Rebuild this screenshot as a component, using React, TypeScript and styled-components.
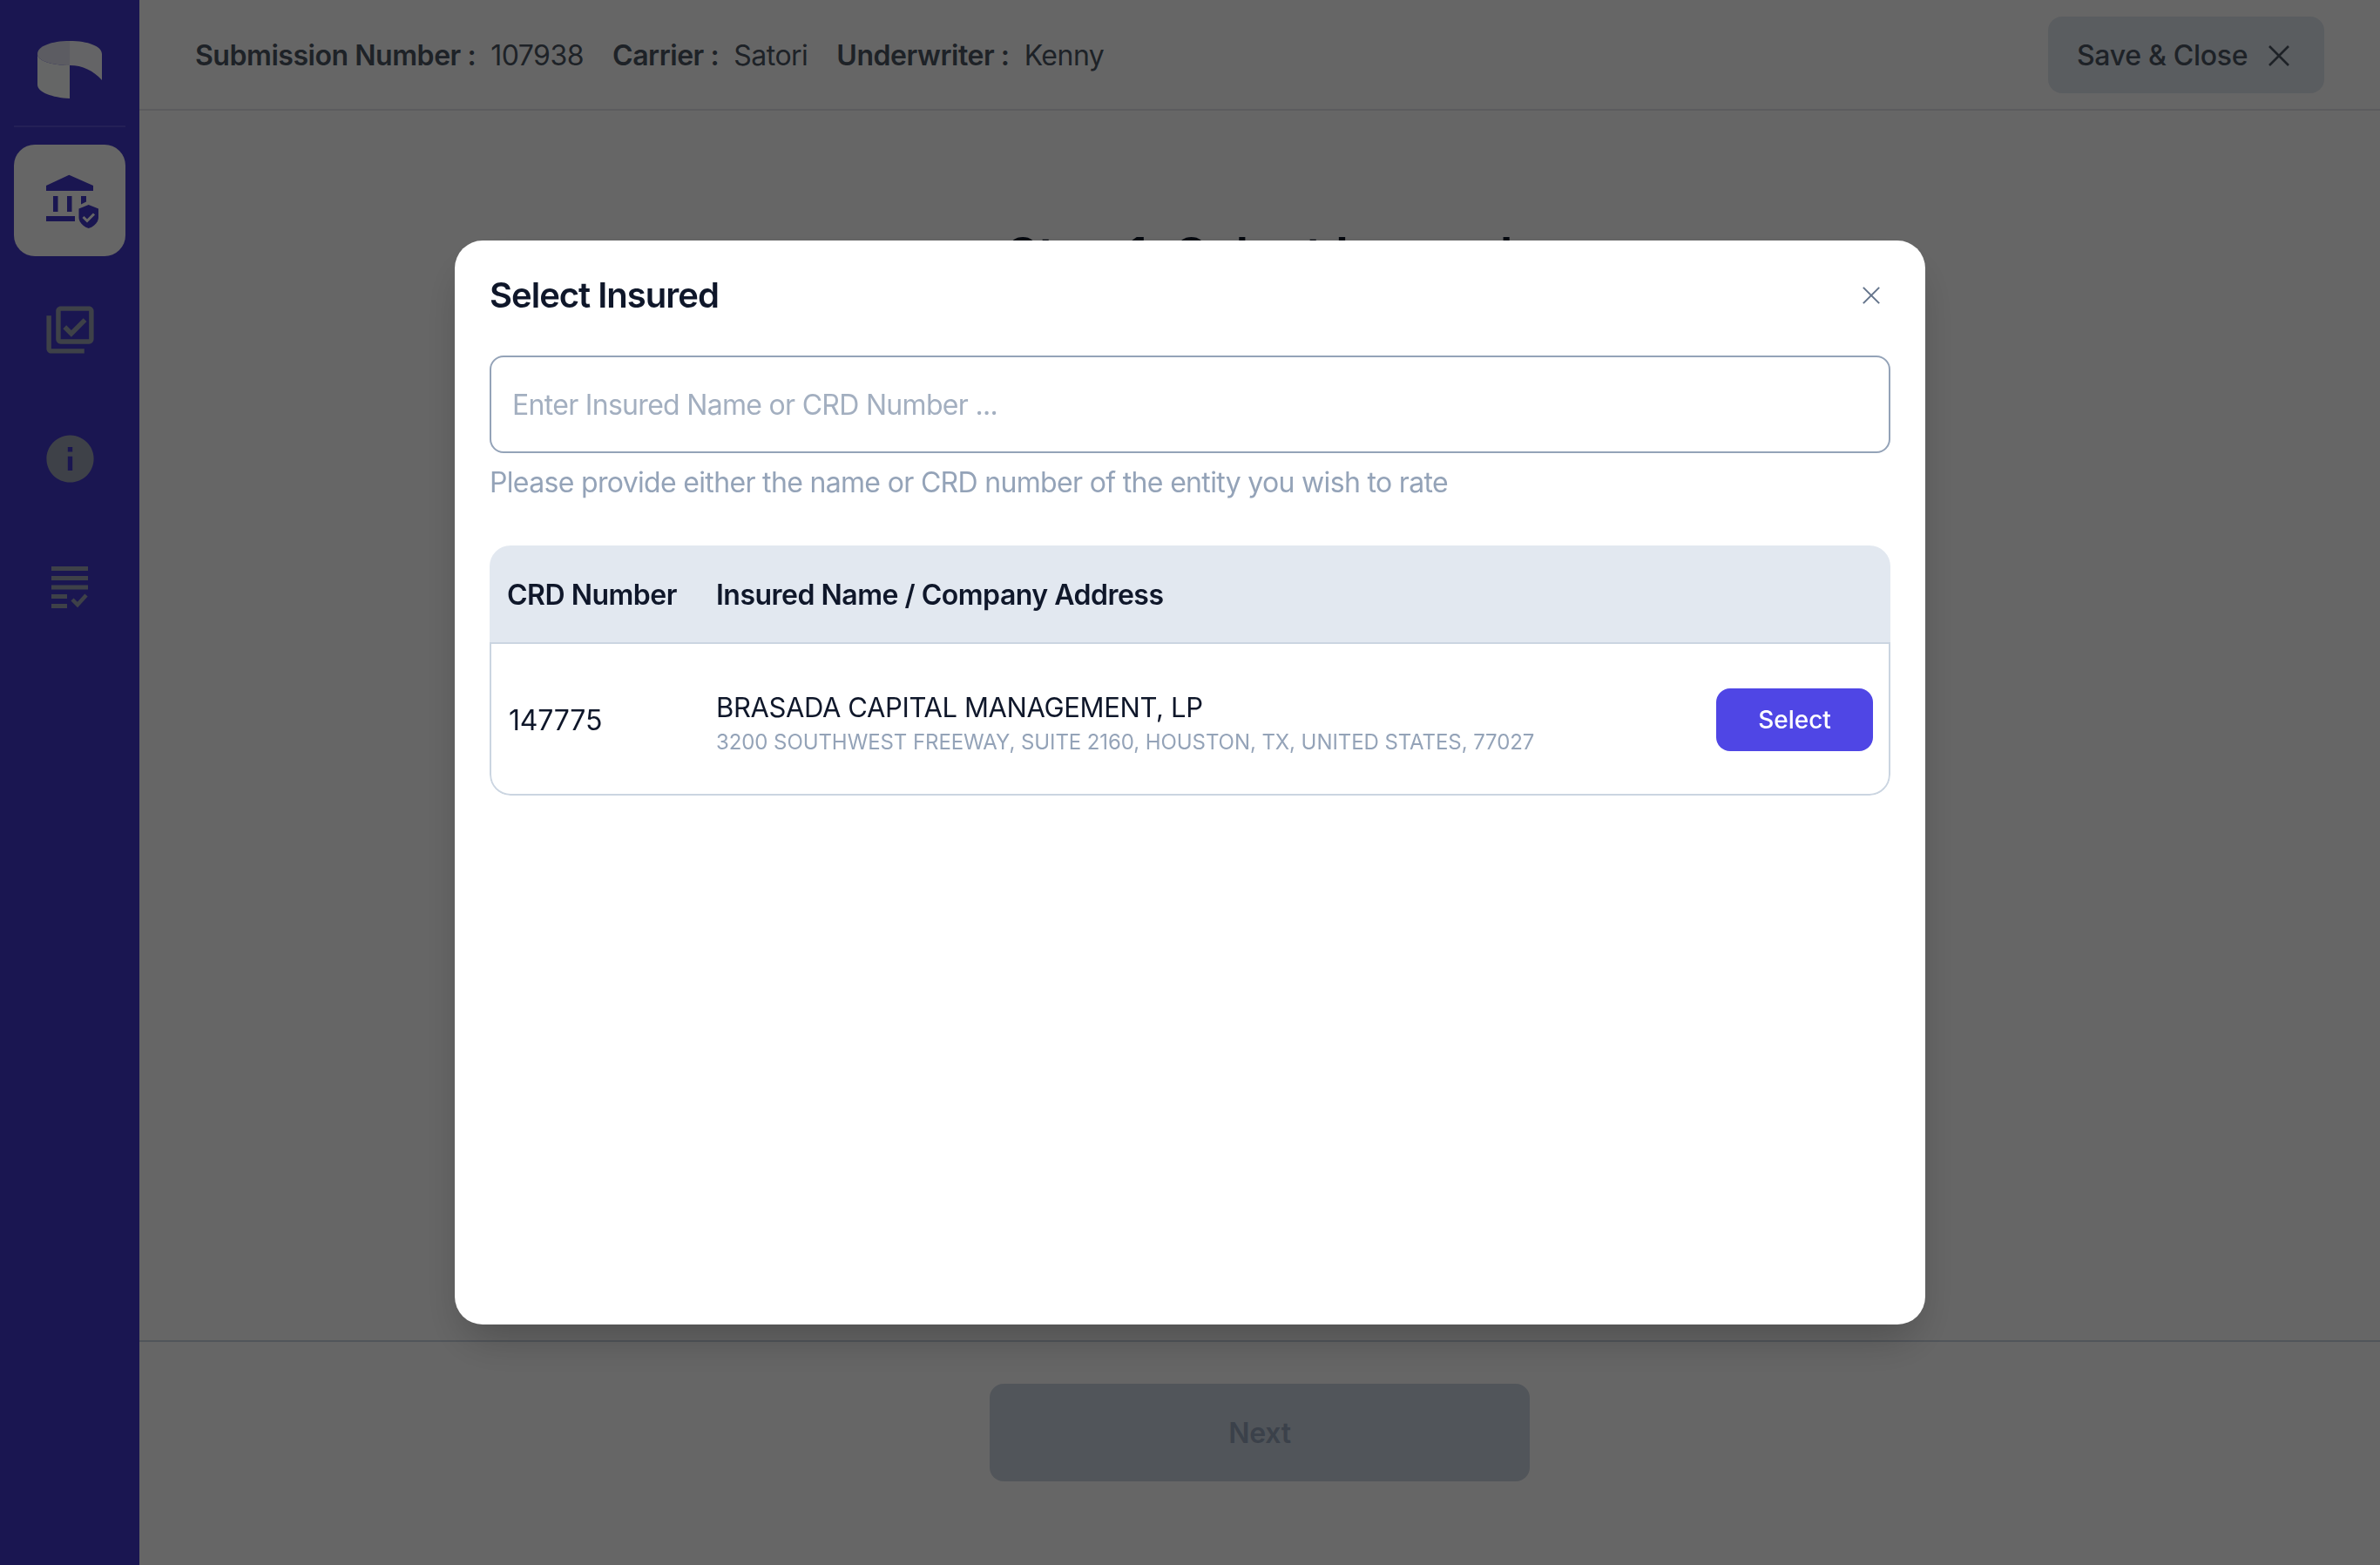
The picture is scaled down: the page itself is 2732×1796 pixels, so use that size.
import React from "react";
import styled, { createGlobalStyle } from "styled-components";

const GlobalStyle = createGlobalStyle`
  html, body {
    margin: 0;
    height: 100%;
    background: #fff;
    font-family: Inter, "Liberation Sans", sans-serif;
  }
  #root {
    height: 100%;
  }
  * {
    box-sizing: border-box;
  }
`;

const Page = styled.div`
  display: flex;
  height: 100%;
  overflow: hidden;
`;

const Sidebar = styled.aside`
  width: 160px;
  flex-shrink: 0;
  background: #4338ca;
  padding: 0 16px;
  display: flex;
  flex-direction: column;
  align-items: stretch;
`;

const LogoBox = styled.div`
  height: 146px;
  margin-bottom: 20px;
  border-bottom: 2px solid #5b52d6;
  display: flex;
  justify-content: center;
  padding-top: 47px;
`;

const NavList = styled.nav`
  display: flex;
  flex-direction: column;
  gap: 20px;
`;

const NavItem = styled.div<{ $active?: boolean }>`
  height: 128px;
  border-radius: 24px;
  display: flex;
  align-items: center;
  justify-content: center;
  background: ${(p) => (p.$active ? "#fff" : "transparent")};
  color: ${(p) => (p.$active ? "#4338ca" : "#9ca3b4")};
`;

const Main = styled.main`
  flex: 1;
  display: flex;
  flex-direction: column;
  min-width: 0;
`;

const Header = styled.header`
  height: 127px;
  flex-shrink: 0;
  border-bottom: 2px solid #e5e7eb;
  padding: 0 64px;
  display: flex;
  align-items: center;
  justify-content: space-between;
`;

const Meta = styled.div`
  display: flex;
  gap: 33px;
  padding-top: 2px;
  font-size: 32px;
  letter-spacing: -0.5px;
  color: #4b5563;
`;

const MetaItem = styled.span`
  display: flex;
  gap: 17px;
  font-weight: 400;

  b {
    font-weight: 600;
    letter-spacing: -0.45px;
  }
`;

const SaveButton = styled.button`
  width: 317px;
  height: 88px;
  border: 0;
  border-radius: 16px;
  background: #e2e8f0;
  color: #4b5563;
  font: 500 32px Inter, sans-serif;
  letter-spacing: -0.3px;
  display: flex;
  align-items: center;
  gap: 24px;
  padding: 2px 0 0 33px;
`;

const Content = styled.div`
  flex: 1;
  text-align: center;
  padding-top: 130px;
`;

const StepTitle = styled.h1`
  margin: 0;
  font-size: 56px;
  line-height: 72px;
  font-weight: 600;
  color: #0f172a;
`;

const Footer = styled.footer`
  height: 258px;
  flex-shrink: 0;
  border-top: 2px solid #cbd5e1;
  display: flex;
  justify-content: center;
  padding-top: 48px;
`;

const NextButton = styled.button`
  width: 620px;
  height: 112px;
  border: 0;
  border-radius: 16px;
  background: #cbd5e1;
  color: #94a3b8;
  font: 600 32px Inter, sans-serif;
  letter-spacing: -0.3px;
`;

const Overlay = styled.div`
  position: fixed;
  inset: 0;
  background: rgba(0, 0, 0, 0.6);
  display: flex;
  align-items: center;
  justify-content: center;
`;

const Modal = styled.div`
  width: 1688px;
  height: 1244px;
  background: #fff;
  border-radius: 32px;
  padding: 32px 40px;
  box-shadow: 0 25px 50px -12px rgba(0, 0, 0, 0.25);
`;

const ModalHead = styled.div`
  display: flex;
  align-items: center;
  justify-content: space-between;
  height: 58px;
  padding-top: 3px;
  margin-bottom: 42px;
`;

const ModalTitle = styled.h2`
  margin: 0;
  font-size: 40px;
  font-weight: 600;
  letter-spacing: -1px;
  color: #0f172a;
`;

const CloseIcon = styled.button`
  border: 0;
  padding: 0;
  background: none;
  color: #64748b;
  display: flex;
  margin-right: 12px;
`;

const SearchInput = styled.input`
  display: block;
  width: 100%;
  height: 112px;
  border: 2px solid #94a3b8;
  border-radius: 16px;
  padding: 0 24px;
  font: 400 32px Inter, sans-serif;
  letter-spacing: -0.7px;
  outline: none;

  &::placeholder {
    color: #a3afc0;
    opacity: 1;
  }
`;

const Helper = styled.p`
  margin: 14px 0 52px;
  font-size: 32px;
  line-height: 40px;
  letter-spacing: -0.67px;
  color: #94a3b8;
`;

const TableBox = styled.div`
  border-radius: 24px;
  overflow: hidden;
`;

const TableHead = styled.div`
  height: 113px;
  background: #e2e8f0;
  border-bottom: 2px solid #cbd5e1;
  display: grid;
  grid-template-columns: 240px 1fr;
  align-items: center;
  padding: 2px 20px 0;
  font-size: 32px;
  font-weight: 600;
  letter-spacing: -0.5px;
  color: #0f172a;
`;

const TableRow = styled.div`
  height: 174px;
  border: solid #cbd5e1;
  border-width: 0 2px 2px;
  border-radius: 0 0 24px 24px;
  display: grid;
  grid-template-columns: 238px 1fr auto;
  align-items: center;
  padding: 2px 18px 0 20px;
  font-size: 31px;
  letter-spacing: -0.37px;
  color: #0f172a;
`;

const CrdNumber = styled.span`
  font-size: 32px;
  letter-spacing: -0.2px;
`;

const NameCell = styled.div`
  display: flex;
  flex-direction: column;
  gap: 6px;
  padding-top: 8px;
`;

const Address = styled.span`
  font-size: 24px;
  line-height: 32px;
  letter-spacing: -0.08px;
  color: #94a3b8;
`;

const SelectButton = styled.button`
  width: 180px;
  height: 72px;
  border: 0;
  border-radius: 16px;
  background: #4f46e5;
  color: #fff;
  font: 500 28px Inter, sans-serif;
`;

const Logo = () => (
  <svg width="74" height="66" viewBox="0 0 74 66">
    <path d="M37 0C16 0 0 6 0 15C0 23 17 28 37 28Z" fill="#e5e5f5" />
    <path d="M0 15C0 23 17 28 37 28V66C17 65 0 59 0 50Z" fill="#fcffff" />
    <path d="M37 0C58 0 74 6 74 15V45C64 34 52 28 37 28Z" fill="#f9f9ff" />
  </svg>
);

const BankIcon = () => (
  <svg width="66" height="64" viewBox="-6 -2 66 64" fill="currentColor">
    <path d="M26.300.7 54 13v6H0v-6Z" />
    <path d="M8 25h5.500v18H8zM24 25h5.500v18H24zM40 25h6v6.500l-6 3Z" />
    <path d="M0 48h33v6H0Z" />
    <path d="M48.700 35 60 39.500v9.500C60 55 55.500 60 48.700 62 42 60 37.500 55 37.500 49v-9.500Z" />
    <path d="m42.500 49 4.500 4.500 8-8" fill="none" stroke="#fff" strokeWidth="3" />
  </svg>
);

const LibraryCheckIcon = () => (
  <svg width="65" height="65" viewBox="0 0 24 24" fill="currentColor">
    <path d="M20 4v12H8V4h12m0-2H8c-1.100 0-2 .9-2 2v12c0 1.100.9 2 2 2h12c1.100 0 2-.9 2-2V4c0-1.100-.9-2-2-2zm-7.500 13-3.500-3.500 1.400-1.400 2.100 2.100 5.100-5.100 1.400 1.400L12.500 15zM4 6H2v14c0 1.100.9 2 2 2h14v-2H4V6z" />
  </svg>
);

const InfoIcon = () => (
  <svg width="65" height="65" viewBox="0 0 24 24" fill="currentColor">
    <path d="M12 2C6.480 2 2 6.480 2 12s4.480 10 10 10 10-4.480 10-10S17.520 2 12 2zm1 15h-2v-6h2v6zm0-8h-2V7h2v2z" />
  </svg>
);

const ChecklistIcon = () => (
  <svg width="42" height="48" viewBox="0 0 42 48" fill="currentColor">
    <path d="M0 0h42v5H0zM0 11h42v5H0zM0 21.500h42v5H0zM0 32h18v5H0zM0 43h18v5H0z" />
    <path d="m24 38 6 6 10-11" fill="none" stroke="currentColor" strokeWidth="4.500" />
  </svg>
);

const Cross = ({ size, width }: { size: number; width: number }) => (
  <svg width={size} height={size} viewBox="0 0 24 24" fill="none" stroke="currentColor" strokeWidth={width}>
    <path d="M1 1l22 22M23 1 1 23" />
  </svg>
);

const App: React.FC = () => {
  return (
    <Page>
      <GlobalStyle />
      <Sidebar>
        <LogoBox>
          <Logo />
        </LogoBox>
        <NavList>
          <NavItem $active>
            <BankIcon />
          </NavItem>
          <NavItem>
            <LibraryCheckIcon />
          </NavItem>
          <NavItem>
            <InfoIcon />
          </NavItem>
          <NavItem>
            <ChecklistIcon />
          </NavItem>
        </NavList>
      </Sidebar>
      <Main>
        <Header>
          <Meta>
            <MetaItem>
              <b>Submission Number :</b> 107938
            </MetaItem>
            <MetaItem>
              <b>Carrier :</b> Satori
            </MetaItem>
            <MetaItem>
              <b>Underwriter :</b> Kenny
            </MetaItem>
          </Meta>
          <SaveButton>
            Save &amp; Close
            <Cross size={24} width={2.6} />
          </SaveButton>
        </Header>
        <Content>
          <StepTitle>Step 1: Select Insured</StepTitle>
        </Content>
        <Footer>
          <NextButton>Next</NextButton>
        </Footer>
      </Main>
      <Overlay>
        <Modal>
          <ModalHead>
            <ModalTitle>Select Insured</ModalTitle>
            <CloseIcon>
              <Cross size={20} width={2.4} />
            </CloseIcon>
          </ModalHead>
          <SearchInput placeholder="Enter Insured Name or CRD Number ..." />
          <Helper>Please provide either the name or CRD number of the entity you wish to rate</Helper>
          <TableBox>
            <TableHead>
              <span>CRD Number</span>
              <span>Insured Name / Company Address</span>
            </TableHead>
            <TableRow>
              <CrdNumber>147775</CrdNumber>
              <NameCell>
                <span>BRASADA CAPITAL MANAGEMENT, LP</span>
                <Address>3200 SOUTHWEST FREEWAY, SUITE 2160, HOUSTON, TX, UNITED STATES, 77027</Address>
              </NameCell>
              <SelectButton>Select</SelectButton>
            </TableRow>
          </TableBox>
        </Modal>
      </Overlay>
    </Page>
  );
};

export default App;
